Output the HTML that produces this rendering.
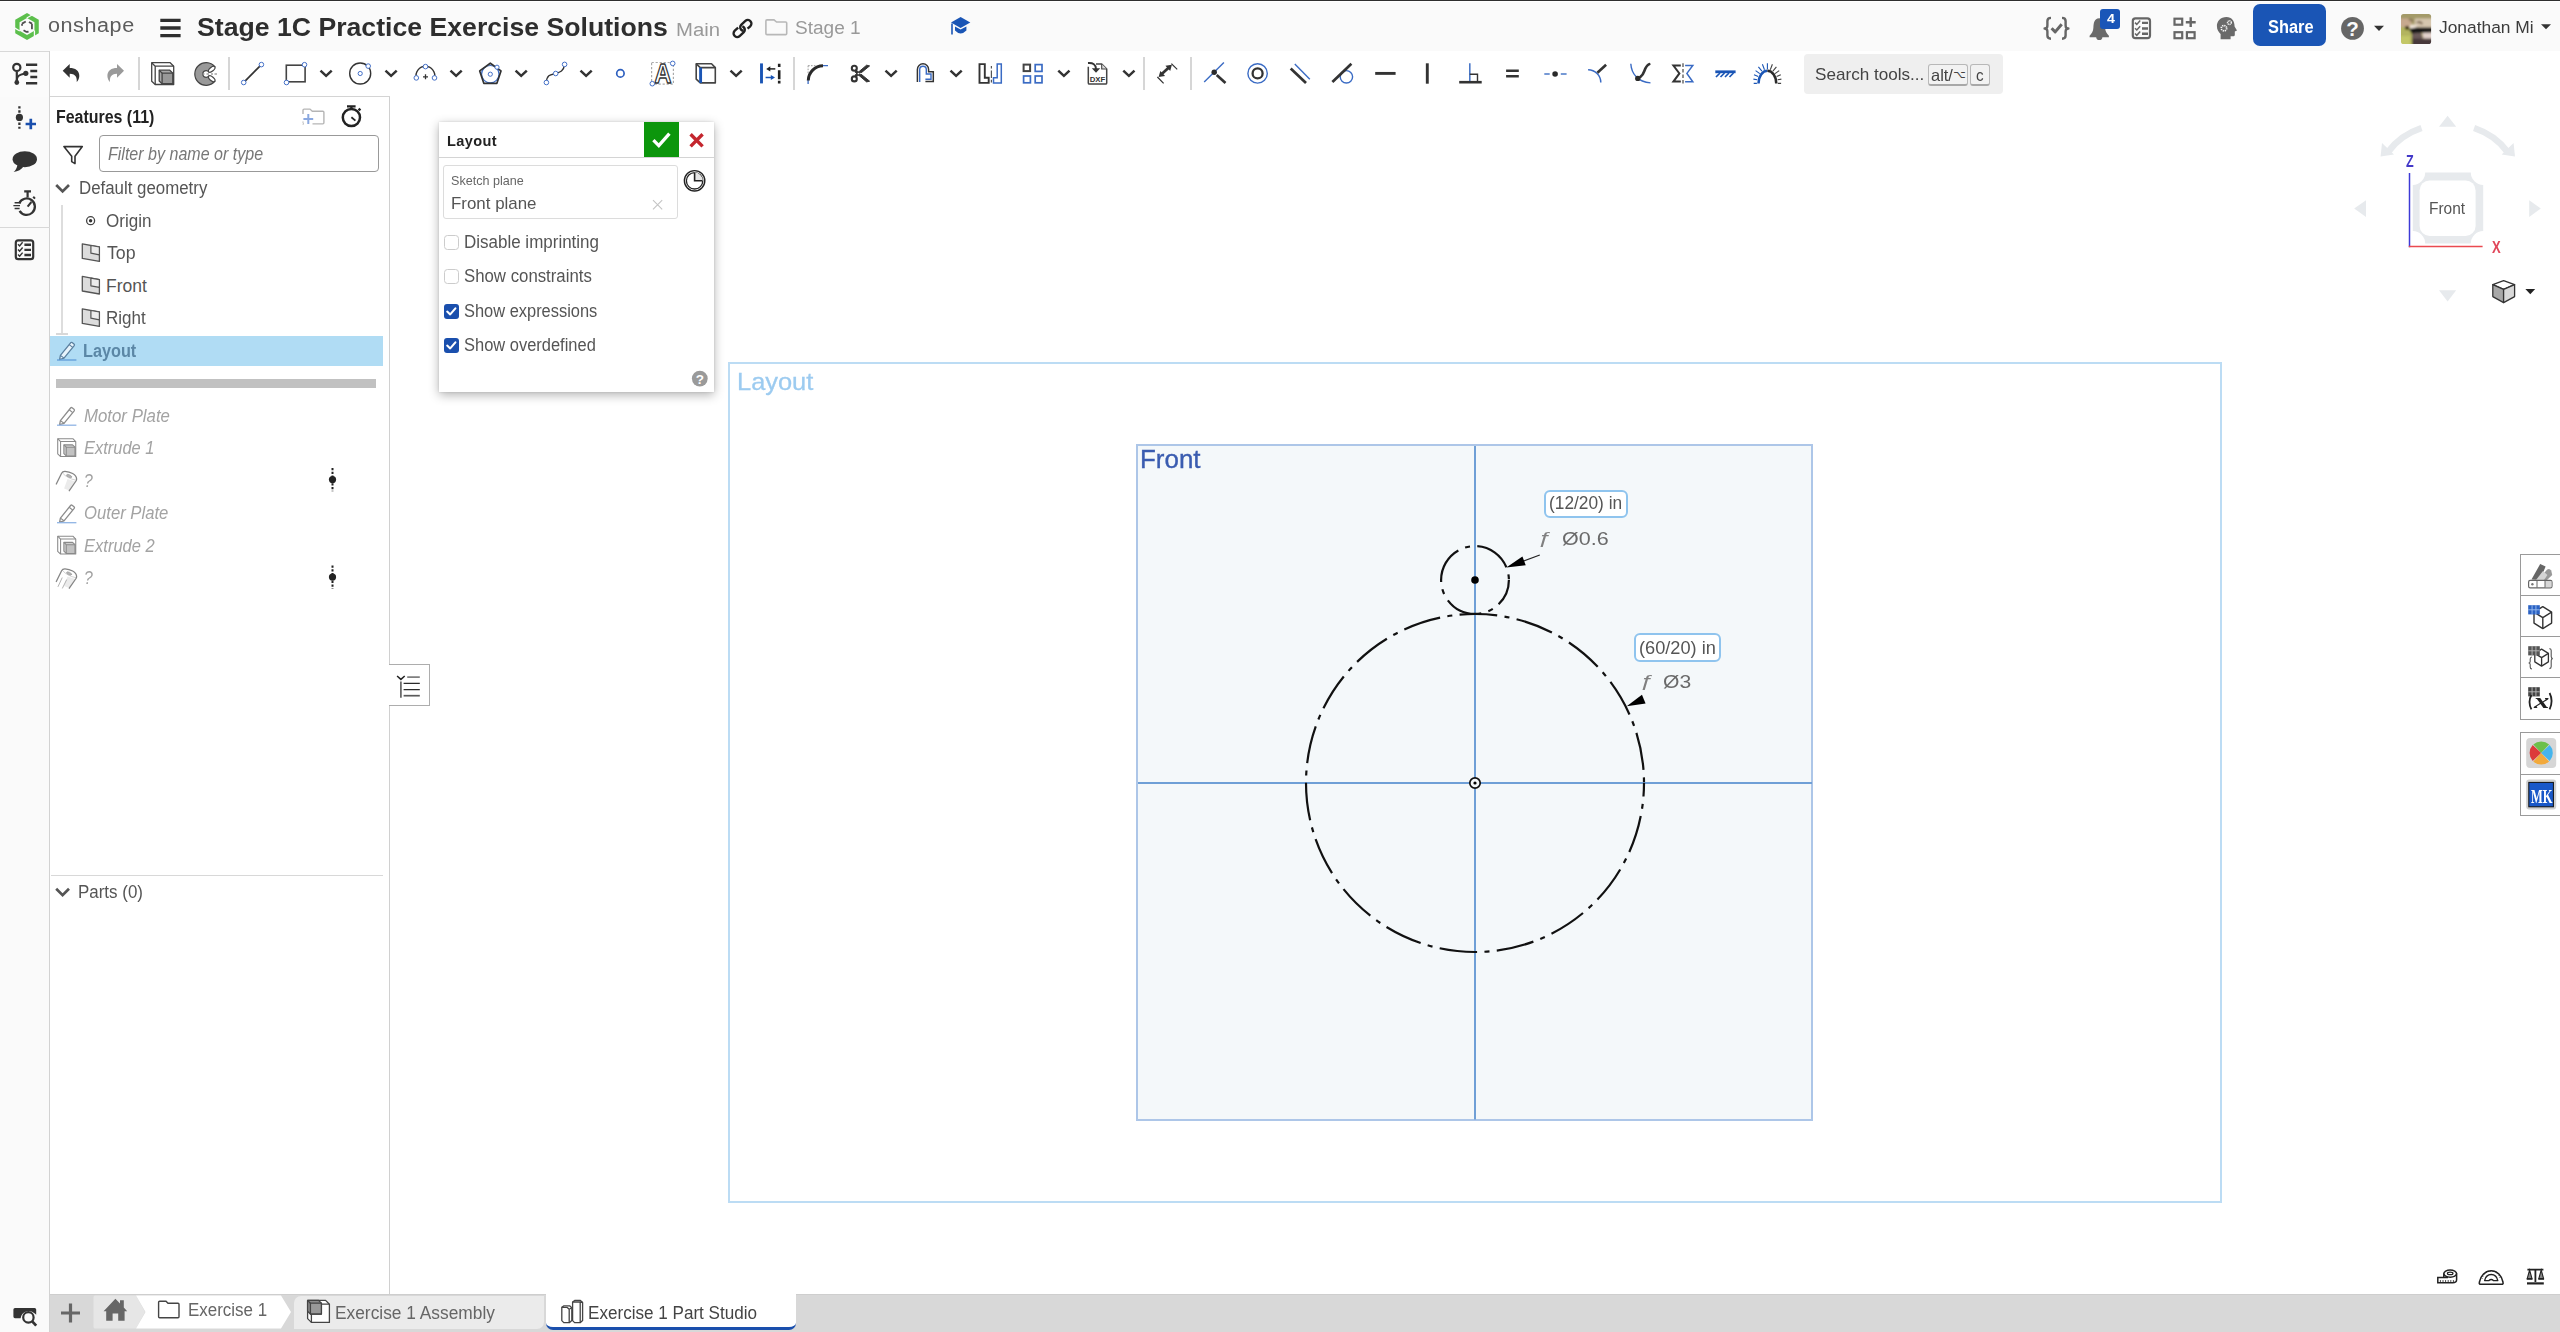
<!DOCTYPE html>
<html lang="en"><head><meta charset="utf-8"><title>Stage 1C Practice Exercise Solutions</title>
<style>
html,body{margin:0;padding:0;background:#fff;}
body{font-family:"Liberation Sans",sans-serif;}
#app{position:relative;width:2560px;height:1332px;overflow:hidden;background:#fff;}
.b{position:absolute;box-sizing:border-box;display:block;}
.t{position:absolute;white-space:nowrap;transform-origin:0 0;display:block;}
svg{overflow:visible;}
</style></head><body><div id="app">
<div class="b" style="left:0px;top:0px;width:2560px;height:51px;background:#fafafa;"></div>
<div class="b" style="left:0px;top:0px;width:2560px;height:2.1px;background:#fff;"></div>
<div class="b" style="left:0px;top:0px;width:2560px;height:1.15px;background:#2e2e2e;"></div>
<div class="b" style="left:0px;top:51px;width:2560px;height:46px;background:#fff;"></div>
<div class="b" style="left:50px;top:96px;width:340px;height:1px;background:#d4d4d4;"></div>
<div class="b" style="left:0px;top:51px;width:50px;height:1281px;background:#fafafa;"></div>
<div class="b" style="left:49px;top:51px;width:1.2px;height:1281px;background:#d2d2d2;"></div>
<div class="b" style="left:0px;top:51px;width:49px;height:46px;background:#fbfbfb;border-top:1px solid #d8d8d8;"></div>
<div class="b" style="left:0px;top:227px;width:50px;height:1px;background:#d8d8d8;"></div>
<div class="b" style="left:50px;top:97px;width:339px;height:1198px;background:#fff;"></div>
<div class="b" style="left:389px;top:97px;width:1px;height:1198px;background:#d0d0d0;"></div>
<span class="t" style="left:197.20px;top:14px;font-size:26.5px;line-height:26.5px;color:#2e2e2e;font-weight:700;transform:scaleX(1.0053);">Stage 1C Practice Exercise Solutions</span>
<span class="t" style="left:676.38px;top:21px;font-size:18px;line-height:18px;color:#999;transform:scaleX(1.1276);">Main</span>
<span class="t" style="left:794.74px;top:18px;font-size:19.2px;line-height:19.2px;color:#999;transform:scaleX(0.9935);">Stage 1</span>
<span class="t" style="left:48.14px;top:16px;font-size:19.6px;line-height:19.6px;color:#5c5c5c;letter-spacing:0.5px;transform:scaleX(1.1020);">onshape</span>
<div class="b" style="left:2253px;top:4px;width:73px;height:42px;background:#1a55b5;border-radius:7px;"></div>
<span class="t" style="left:2267.51px;top:18px;font-size:18px;line-height:18px;color:#fff;font-weight:700;transform:scaleX(0.9106);">Share</span>
<span class="t" style="left:2438.64px;top:20px;font-size:16.8px;line-height:16.8px;color:#3c3c3c;transform:scaleX(1.0351);">Jonathan Mi</span>
<div class="b" style="left:1803.6px;top:53.6px;width:199.2px;height:40.6px;background:#efefef;border-radius:4px;"></div>
<span class="t" style="left:1815.33px;top:66px;font-size:17px;line-height:17px;color:#444;transform:scaleX(1.0063);">Search tools...</span>
<div class="b" style="left:1928.3px;top:64px;width:40.2px;height:21.8px;background:#f2f2f2;border:1px solid #b8b8b8;border-bottom:2px solid #a8a8a8;border-radius:3px;"></div>
<div class="b" style="left:1969.6px;top:64px;width:20.4px;height:21.8px;background:#f2f2f2;border:1px solid #b8b8b8;border-bottom:2px solid #a8a8a8;border-radius:3px;"></div>
<span class="t" style="left:1931.44px;top:67px;font-size:16.5px;line-height:16.5px;color:#444;transform:scaleX(0.9968);">alt/</span>
<span class="t" style="left:1953.2px;top:67.6px;font-size:10.8px;line-height:14px;color:#444;font-family:'DejaVu Sans',sans-serif;">⌥</span>
<span class="t" style="left:1976.09px;top:67px;font-size:16.5px;line-height:16.5px;color:#444;transform:scaleX(0.9195);">c</span>
<div class="b" style="left:137.8px;top:57px;width:2px;height:33px;background:#d6d6d6;"></div>
<div class="b" style="left:228px;top:57px;width:2px;height:33px;background:#d6d6d6;"></div>
<div class="b" style="left:793px;top:57px;width:2px;height:33px;background:#d6d6d6;"></div>
<div class="b" style="left:1143px;top:57px;width:2px;height:33px;background:#d6d6d6;"></div>
<div class="b" style="left:1190.3px;top:57px;width:2px;height:33px;background:#d6d6d6;"></div>
<span class="t" style="left:55.76px;top:109px;font-size:17.5px;line-height:17.5px;color:#222;font-weight:700;transform:scaleX(0.9107);">Features (11)</span>
<div class="b" style="left:99px;top:135px;width:280px;height:37px;background:#fff;border:1px solid #999;border-radius:4px;"></div>
<span class="t" style="left:107.52px;top:146px;font-size:17.5px;line-height:17.5px;color:#777;font-style:italic;transform:scaleX(0.9162);">Filter by name or type</span>
<span class="t" style="left:78.95px;top:180px;font-size:17.5px;line-height:17.5px;color:#555;transform:scaleX(0.9631);">Default geometry</span>
<span class="t" style="left:106.23px;top:213px;font-size:17.5px;line-height:17.5px;color:#555;transform:scaleX(0.9729);">Origin</span>
<span class="t" style="left:106.65px;top:245px;font-size:17.5px;line-height:17.5px;color:#555;transform:scaleX(1.0138);">Top</span>
<span class="t" style="left:106.00px;top:278px;font-size:17.5px;line-height:17.5px;color:#555;">Front</span>
<span class="t" style="left:106.04px;top:310px;font-size:17.5px;line-height:17.5px;color:#555;transform:scaleX(0.9723);">Right</span>
<div class="b" style="left:61px;top:205px;width:2px;height:129px;background:#dddddd;"></div>
<div class="b" style="left:56px;top:333px;width:12px;height:1.6px;background:#d8d8d8;"></div>
<div class="b" style="left:50px;top:336px;width:333px;height:30px;background:#b0dcf4;"></div>
<span class="t" style="left:83.04px;top:343px;font-size:17.5px;line-height:17.5px;color:#5b87a6;font-weight:700;transform:scaleX(0.9286);">Layout</span>
<div class="b" style="left:56px;top:379px;width:320px;height:8.5px;background:#c1c1c1;"></div>
<span class="t" style="left:84.00px;top:408px;font-size:17.5px;line-height:17.5px;color:#a3a3a3;font-style:italic;transform:scaleX(0.9605);">Motor Plate</span>
<span class="t" style="left:84.01px;top:440px;font-size:17.5px;line-height:17.5px;color:#a3a3a3;font-style:italic;transform:scaleX(0.9398);">Extrude 1</span>
<span class="t" style="left:84.24px;top:473px;font-size:17.5px;line-height:17.5px;color:#a3a3a3;font-style:italic;transform:scaleX(0.9023);">?</span>
<span class="t" style="left:83.58px;top:505px;font-size:17.5px;line-height:17.5px;color:#a3a3a3;font-style:italic;transform:scaleX(0.9530);">Outer Plate</span>
<span class="t" style="left:84.00px;top:538px;font-size:17.5px;line-height:17.5px;color:#a3a3a3;font-style:italic;transform:scaleX(0.9445);">Extrude 2</span>
<span class="t" style="left:84.24px;top:570px;font-size:17.5px;line-height:17.5px;color:#a3a3a3;font-style:italic;transform:scaleX(0.9023);">?</span>
<div class="b" style="left:51px;top:875px;width:332px;height:1px;background:#d8d8d8;"></div>
<span class="t" style="left:78.14px;top:884px;font-size:17.5px;line-height:17.5px;color:#555;transform:scaleX(0.9679);">Parts (0)</span>
<div class="b" style="left:389px;top:664px;width:41px;height:42px;background:#fff;border:1px solid #adadad;border-left:none;"></div>
<div class="b" style="left:439px;top:122px;width:275px;height:270px;background:#fff;box-shadow:0 3px 10px rgba(0,0,0,0.30),0 0 2px rgba(0,0,0,0.12);"></div>
<div class="b" style="left:439px;top:157px;width:275px;height:1px;background:#d4d4d4;"></div>
<div class="b" style="left:644px;top:122px;width:35px;height:35px;background:#0c960c;"></div>
<span class="t" style="left:447.15px;top:133px;font-size:15.5px;line-height:15.5px;color:#222;font-weight:700;letter-spacing:0.4px;transform:scaleX(0.9380);">Layout</span>
<div class="b" style="left:443px;top:165px;width:235px;height:54px;background:#fff;border:1px solid #dcdcdc;border-radius:3px;"></div>
<span class="t" style="left:451.33px;top:174px;font-size:13.5px;line-height:13.5px;color:#666;transform:scaleX(0.9321);">Sketch plane</span>
<span class="t" style="left:450.75px;top:195px;font-size:17px;line-height:17px;color:#555;transform:scaleX(0.9941);">Front plane</span>
<div class="b" style="left:444.3px;top:235.4px;width:14.5px;height:14.5px;background:#fff;border:1px solid #ccc;border-radius:3.5px;"></div>
<span class="t" style="left:463.84px;top:234px;font-size:17.5px;line-height:17.5px;color:#555;transform:scaleX(0.9707);">Disable imprinting</span>
<div class="b" style="left:444.3px;top:269.4px;width:14.5px;height:14.5px;background:#fff;border:1px solid #ccc;border-radius:3.5px;"></div>
<span class="t" style="left:463.64px;top:268px;font-size:17.5px;line-height:17.5px;color:#555;transform:scaleX(0.9593);">Show constraints</span>
<div class="b" style="left:444.3px;top:304px;width:14.5px;height:14.5px;background:#1a4fad;border-radius:3px;"></div>
<svg class="b" style="left:444.3px;top:304px;" width="14.5" height="14.5" viewBox="0 0 14.5 14.5"><path d="M3.2 7.6 L6.2 10.4 L11.4 4.4" fill="none" stroke="#fff" stroke-width="2.1" stroke-linecap="round" stroke-linejoin="round"/></svg>
<span class="t" style="left:463.66px;top:303px;font-size:17.5px;line-height:17.5px;color:#555;transform:scaleX(0.9388);">Show expressions</span>
<div class="b" style="left:444.3px;top:338px;width:14.5px;height:14.5px;background:#1a4fad;border-radius:3px;"></div>
<svg class="b" style="left:444.3px;top:338px;" width="14.5" height="14.5" viewBox="0 0 14.5 14.5"><path d="M3.2 7.6 L6.2 10.4 L11.4 4.4" fill="none" stroke="#fff" stroke-width="2.1" stroke-linecap="round" stroke-linejoin="round"/></svg>
<span class="t" style="left:463.66px;top:337px;font-size:17.5px;line-height:17.5px;color:#555;transform:scaleX(0.9409);">Show overdefined</span>
<div class="b" style="left:50.2px;top:1294.2px;width:2510px;height:38px;background:#d8d8d8;border-top:1px solid #cecece;"></div>
<svg class="b" style="left:93px;top:1295px;" width="60" height="34" viewBox="0 0 60 34"><path d="M2 0.5 H43 L52 17 L43 33.5 H2 Q0.5 33.5 0.5 32 V2 Q0.5 0.5 2 0.5Z" fill="#e6e6e6"/></svg>
<svg class="b" style="left:136px;top:1295px;" width="160" height="34" viewBox="0 0 160 34"><path d="M0 0.5 H145 L155 17 L145 33.5 H0 L9.5 17Z" fill="#fff"/></svg>
<span class="t" style="left:187.74px;top:1302px;font-size:17.5px;line-height:17.5px;color:#666;transform:scaleX(0.9692);">Exercise 1</span>
<div class="b" style="left:293.5px;top:1295.5px;width:250.5px;height:33px;background:#ebebeb;border-radius:7px 0 7px 0;"></div>
<span class="t" style="left:334.61px;top:1305px;font-size:17.5px;line-height:17.5px;color:#666;transform:scaleX(0.9904);">Exercise 1 Assembly</span>
<div class="b" style="left:546px;top:1293px;width:250px;height:37px;background:#fff;border-radius:0 0 7px 7px;border-bottom:3px solid #1a4fad;"></div>
<span class="t" style="left:587.73px;top:1305px;font-size:17.5px;line-height:17.5px;color:#444;transform:scaleX(0.9763);">Exercise 1 Part Studio</span>
<div class="b" style="left:728px;top:362px;width:1493.5px;height:841.3px;border:2px solid #bcdcf4;"></div>
<span class="t" style="left:737.47px;top:370px;font-size:24px;line-height:24px;color:#9ccbf0;transform:scaleX(1.0592);-webkit-text-stroke:0.3px #9ccbf0;">Layout</span>
<div class="b" style="left:1136px;top:443.7px;width:677.3px;height:677px;background:#f4f8fa;border:2.5px solid #adc6e8;"></div>
<span class="t" style="left:1139.63px;top:447px;font-size:25px;line-height:25px;color:#3a5cb0;transform:scaleX(1.0370);-webkit-text-stroke:0.35px #3a5cb0;">Front</span>
<svg class="b" style="left:1130px;top:440px;" width="690" height="690" viewBox="0 0 690 690"><path d="M345.00 6.00 V679.5" stroke="#6f9fd6" stroke-width="2" fill="none"/><path d="M8.00 343.00 H682" stroke="#6f9fd6" stroke-width="2" fill="none"/><path d="M514.00 343.00 A169 169 0 0 0 176.00 343.00 A169 169 0 0 0 514.00 343.00" fill="none" stroke="#111" stroke-width="2.2" stroke-dasharray="37.75 7.37 5 7.37" stroke-dashoffset="44.4"/><path d="M378.90 140.00 A33.9 33.9 0 0 0 311.10 140.00 A33.9 33.9 0 0 0 378.90 140.00" fill="none" stroke="#111" stroke-width="2.2" stroke-dasharray="37.75 7.37 5 7.37" stroke-dashoffset="44.4"/><circle cx="345" cy="140" r="3.8" fill="#000"/><circle cx="345" cy="343" r="5.2" fill="#f4f8fa" stroke="#111" stroke-width="1.7"/><circle cx="345" cy="343" r="1.6" fill="#000"/><path d="M409.80 115.00 L382.00 125.40" stroke="#222" stroke-width="1.3" fill="none"/><path d="M376.30 127.60 L395.76 125.36 L392.41 116.47Z" fill="#000"/><path d="M496.70 266.20 L515.60 263.48 L511.95 254.71Z" fill="#000"/></svg>
<div class="b" style="left:1543.8px;top:490px;width:84.5px;height:27.5px;background:#fff;border:2px solid #8fc4ee;border-radius:6px;"></div>
<span class="t" style="left:1549.46px;top:495px;font-size:17.5px;line-height:17.5px;color:#555;transform:scaleX(0.9895);">(12/20) in</span>
<div class="b" style="left:1634px;top:633px;width:86.5px;height:29px;background:#fff;border:2px solid #8fc4ee;border-radius:6px;"></div>
<span class="t" style="left:1639.41px;top:640px;font-size:17.5px;line-height:17.5px;color:#555;transform:scaleX(1.0397);">(60/20) in</span>
<span class="t" style="left:1537.45px;top:530px;font-size:16.5px;line-height:16.5px;color:#808080;font-style:italic;transform:scaleX(1.5354);">ƒ</span>
<span class="t" style="left:1562.25px;top:529px;font-size:19px;line-height:19px;color:#6a6a6a;transform:scaleX(1.1332);">Ø0.6</span>
<span class="t" style="left:1639.45px;top:673px;font-size:16.5px;line-height:16.5px;color:#808080;font-style:italic;transform:scaleX(1.5354);">ƒ</span>
<span class="t" style="left:1663.16px;top:672px;font-size:19px;line-height:19px;color:#6a6a6a;transform:scaleX(1.1111);">Ø3</span>
<svg class="b" style="left:0px;top:0px;" width="2560" height="100" viewBox="0 0 2560 100"><path d="M62.7 70.8 L69.7 64 V68 C75.2 68 79.3 70.6 79.3 76 C79.3 78.6 78 80.8 76.7 82 C77.1 78.6 76.3 73.8 69.7 73.8 V77.8 Z" fill="#333"/><g transform="translate(186.7 0) scale(-1 1)"><path d="M62.7 70.8 L69.7 64 V68 C75.2 68 79.3 70.6 79.3 76 C79.3 78.6 78 80.8 76.7 82 C77.1 78.6 76.3 73.8 69.7 73.8 V77.8 Z" fill="#9a9a9a"/></g><g transform="translate(151.2 62.2) scale(1.0)" stroke="#444" stroke-width="1.3" stroke-linejoin="round" fill="none"><path d="M0.5 0.5 H19 L22.5 4 V22.3 H4 L0.5 19 Z" fill="#fff"/><path d="M0.5 0.5 L4 4 H22.5 M4 4 V22.3"/><path d="M8 8 H18.6 L21.6 10.9 V21.5 H10.9 L8 18.8 Z" fill="#aaa"/><path d="M10.9 10.9 H21.6 V21.5 H10.9 Z" fill="#999"/><path d="M8 8 L10.9 10.9"/></g><g stroke="#444" stroke-width="1.2"><path d="M214.76 66.74 A11.3 11.3 0 1 0 214.76 81.26 L208.7 76.2 A3.4 3.4 0 1 1 208.7 71.8 Z" fill="#999"/><ellipse cx="211.73" cy="69.28" rx="3.95" ry="1.9" transform="rotate(-40 211.73 69.28)" fill="#fff"/><ellipse cx="211.73" cy="78.72" rx="3.95" ry="1.9" transform="rotate(40 211.73 78.72)" fill="#fff"/><path d="M202 74 H204.5 M206.5 74 H209 M211 74 H213 M214.5 74 H217" stroke="#777" stroke-width="1.1" fill="none"/></g><path d="M243.8 82.4 L261.2 64.8" stroke="#333" stroke-width="1.7"/><circle cx="243.7" cy="82.5" r="2.3" fill="#fff" stroke="#4470c8" stroke-width="1"/><circle cx="261.4" cy="64.6" r="2.3" fill="#fff" stroke="#4470c8" stroke-width="1"/><rect x="286.3" y="65.2" width="18.8" height="16.6" fill="none" stroke="#444" stroke-width="1.6"/><circle cx="304.5" cy="64.7" r="2.3" fill="#fff" stroke="#4470c8" stroke-width="1"/><circle cx="286.5" cy="82.5" r="2.3" fill="#fff" stroke="#4470c8" stroke-width="1"/><path d="M320.5 70.6 L326.1 75.9 L331.70000000000005 70.6" fill="none" stroke="#333" stroke-width="2.5" stroke-linejoin="miter"/><circle cx="360.2" cy="73.5" r="10.5" fill="none" stroke="#333" stroke-width="1.4"/><circle cx="360.2" cy="73.5" r="2.1" fill="#fff" stroke="#4470c8" stroke-width="1"/><circle cx="368.2" cy="66.1" r="2.3" fill="#fff" stroke="#4470c8" stroke-width="1"/><path d="M385.5 70.6 L391.1 75.9 L396.70000000000005 70.6" fill="none" stroke="#333" stroke-width="2.5" stroke-linejoin="miter"/><path d="M416.3 77.8 A9.35 9.35 0 1 1 434.5 77.8" fill="none" stroke="#333" stroke-width="1.4"/><circle cx="416.3" cy="77.9" r="2.3" fill="#fff" stroke="#4470c8" stroke-width="1"/><circle cx="434.5" cy="77.9" r="2.3" fill="#fff" stroke="#4470c8" stroke-width="1"/><circle cx="425.5" cy="66.6" r="2.3" fill="#fff" stroke="#4470c8" stroke-width="1"/><path d="M423 76.8 H428 M425.5 74.3 V79.3" stroke="#333" stroke-width="1.3"/><path d="M450.5 70.6 L456.1 75.9 L461.70000000000005 70.6" fill="none" stroke="#333" stroke-width="2.5" stroke-linejoin="miter"/><circle cx="490.3" cy="74.2" r="8.7" fill="none" stroke="#3a6bc4" stroke-width="1.2"/><path d="M490.3 63.2 L501 70.9 L496.9 83.3 H483.8 L479.7 70.9 Z" fill="none" stroke="#333" stroke-width="1.7" stroke-linejoin="round"/><circle cx="490.3" cy="74.2" r="2.1" fill="#fff" stroke="#4470c8" stroke-width="1"/><circle cx="497" cy="67.2" r="2.1" fill="#fff" stroke="#4470c8" stroke-width="1"/><path d="M515.6 70.6 L521.2 75.9 L526.8000000000001 70.6" fill="none" stroke="#333" stroke-width="2.5" stroke-linejoin="miter"/><path d="M546.4 82.5 C546.6 74 552 74.6 555.7 73.5 C560 72.2 563.8 71 564.6 64.4" fill="none" stroke="#333" stroke-width="1.4"/><circle cx="546.4" cy="82.5" r="2.3" fill="#fff" stroke="#4470c8" stroke-width="1"/><circle cx="555.7" cy="73.5" r="2.3" fill="#fff" stroke="#4470c8" stroke-width="1"/><circle cx="564.6" cy="64.4" r="2.3" fill="#fff" stroke="#4470c8" stroke-width="1"/><path d="M580.5 70.6 L586.1 75.9 L591.7 70.6" fill="none" stroke="#333" stroke-width="2.5" stroke-linejoin="miter"/><circle cx="620.4" cy="73.4" r="3.7" fill="#fff" stroke="#2d5fbf" stroke-width="1.7"/><rect x="651.6" y="62.5" width="21.8" height="21.6" fill="none" stroke="#aaa" stroke-width="1.2" stroke-dasharray="2.2 1.8"/><text transform="translate(663 83.2) scale(0.84 1)" font-family="Liberation Sans, sans-serif" font-weight="700" font-size="28.5" text-anchor="middle" fill="#fff" stroke="#333" stroke-width="1.4" stroke-linejoin="round">A</text><circle cx="672.7" cy="63.4" r="2.3" fill="#fff" stroke="#4470c8" stroke-width="1"/><circle cx="652.3" cy="83.7" r="2.3" fill="#fff" stroke="#4470c8" stroke-width="1"/><g fill="none" stroke="#444" stroke-width="1.6" stroke-linejoin="round"><path d="M696.2 63.8 H711.5 L715.3 67.6 V82.9 H700.3 L696.2 79.2 Z" fill="#fff"/><path d="M696.2 63.8 L700.3 67.6 H715.3"/></g><path d="M700.6 67.6 V82.9" stroke="#1a55b5" stroke-width="2.9"/><path d="M730.5 70.6 L736.1 75.9 L741.7 70.6" fill="none" stroke="#333" stroke-width="2.5" stroke-linejoin="miter"/><path d="M761.5 63.4 V83.4" stroke="#1a55b5" stroke-width="2.9"/><path d="M779.2 63.7 V67 M779.2 70.2 V79.2 M779.2 80.8 V83.4" stroke="#222" stroke-width="2.6"/><path d="M775.3 68.9 H768" stroke="#222" stroke-width="1.5"/><path d="M766.2 68.9 L770.3 66.3 V71.5Z" fill="#222"/><path d="M765.6 77.5 H773" stroke="#1a55b5" stroke-width="1.5"/><path d="M775 77.5 L770.8 74.9 V80.1Z" fill="#1a55b5"/><path d="M808.1 65.7 H815.5 M808.1 65.7 V74" stroke="#999" stroke-width="1" stroke-dasharray="1.6 1.3" fill="none"/><path d="M808.1 84 V79 M822 65.6 H828" stroke="#3a6bc4" stroke-width="1.3" fill="none"/><path d="M808.3 80.5 A14.9 14.9 0 0 1 823 65.8" stroke="#2a2a2a" stroke-width="3" fill="none"/><g fill="none" stroke="#333" stroke-width="2.1"><circle cx="854.3" cy="68.2" r="2.5"/><circle cx="854.3" cy="78.9" r="2.5"/></g><path d="M856 70 L869.6 81.2 L866.6 81.9 L855.2 72.2 Z M856 77.1 L869.6 65.9 L866.6 65.2 L855.2 74.9 Z" fill="#333" stroke="#333" stroke-width="1" stroke-linejoin="round"/><circle cx="860.9" cy="73.55" r="0.8" fill="#fff"/><path d="M885.5 70.6 L891.1 75.9 L896.7 70.6" fill="none" stroke="#333" stroke-width="2.5" stroke-linejoin="miter"/><path d="M917.4 82 V69.4 A5.6 5.6 0 0 1 928.6 69.4 V71.8 H933.3 V81.6 H925.4" fill="none" stroke="#333" stroke-width="1.5"/><path d="M919.7 82 V69.6 A3.3 3.3 0 0 1 926.3 69.6 V74 H931 V79.3 H925.4" fill="none" stroke="#3a6bc4" stroke-width="1.4"/><path d="M950.5 70.6 L956.1 75.9 L961.7 70.6" fill="none" stroke="#333" stroke-width="2.5" stroke-linejoin="miter"/><path d="M979.5 64.1 H984.8 V77.8 H988.7 V82.9 H979.5 Z" fill="#fff" stroke="#333" stroke-width="1.9"/><path d="M991.4 66 V68.5 M991.4 70.5 V78 M991.4 79.8 V82.6" stroke="#555" stroke-width="1.2"/><path d="M1001.3 64.1 H997.2 V77.8 H993.5 V82.9 H1001.3 Z" fill="#fff" stroke="#3a6bc4" stroke-width="1.5"/><rect x="1023.6" y="64.6" width="6.5" height="6.5" fill="none" stroke="#444" stroke-width="2"/><rect x="1035.2" y="64.6" width="6.8" height="6.8" fill="none" stroke="#3a6bc4" stroke-width="1.7"/><rect x="1023.6" y="76" width="6.8" height="6.8" fill="none" stroke="#3a6bc4" stroke-width="1.7"/><rect x="1035.2" y="76" width="6.8" height="6.8" fill="none" stroke="#3a6bc4" stroke-width="1.7"/><path d="M1058.3000000000002 70.6 L1063.9 75.9 L1069.5 70.6" fill="none" stroke="#333" stroke-width="2.5" stroke-linejoin="miter"/><path d="M1088.3 66.8 V83 Q1088.3 84.1 1089.4 84.1 H1105.6 Q1106.7 84.1 1106.7 83 V69 L1101.7 64 H1096" fill="#fff" stroke="#444" stroke-width="1.5" stroke-linejoin="round"/><path d="M1101.7 64 V69 H1106.7" fill="#ddd" stroke="#444" stroke-width="1.1"/><path d="M1088 63 C1093 62.6 1096 64.5 1096 69" fill="none" stroke="#333" stroke-width="1.9"/><path d="M1091.8 68.3 H1100.2 L1096 72.8 Z" fill="#333"/><text x="1097.5" y="81.9" font-family="Liberation Sans, sans-serif" font-weight="700" font-size="7.6" text-anchor="middle" fill="#333" textLength="15.6" lengthAdjust="spacingAndGlyphs">DXF</text><path d="M1123.3000000000002 70.6 L1128.9 75.9 L1134.5 70.6" fill="none" stroke="#333" stroke-width="2.5" stroke-linejoin="miter"/><path d="M1162 73.8 L1168.6 67.8" stroke="#333" stroke-width="2.8"/><path d="M1158.6 77 L1160.3 70.9 L1165.1 76.1 Z M1171.9 64.8 L1170.2 70.9 L1165.4 65.7 Z" fill="#333"/><path d="M1171.4 63.6 L1177.2 69.4 M1157.4 77 L1163.6 83.4" stroke="#333" stroke-width="1.2"/><path d="M1204.2 82 L1223.9 62.5" stroke="#3a6bc4" stroke-width="1.4"/><circle cx="1214.2" cy="72.2" r="2.7" fill="#2a2a2a"/><path d="M1216.7 75 L1225.5 82.9" stroke="#333" stroke-width="2.7"/><circle cx="1257.6" cy="73.4" r="9.7" fill="none" stroke="#3a6bc4" stroke-width="1.4"/><circle cx="1257.6" cy="73.4" r="5.0" fill="none" stroke="#333" stroke-width="2.3"/><path d="M1290.7 68.5 L1306 82.9" stroke="#333" stroke-width="2.7"/><path d="M1294.8 64 L1309.8 79.2" stroke="#3a6bc4" stroke-width="1.4"/><circle cx="1346.4" cy="76.8" r="6.2" fill="none" stroke="#3a6bc4" stroke-width="1.4"/><path d="M1332.4 82 L1351.4 63.8" stroke="#333" stroke-width="2.7"/><path d="M1375.2 73.4 H1395.6" stroke="#333" stroke-width="2.9"/><path d="M1427.3 63.3 V83.7" stroke="#333" stroke-width="2.9"/><path d="M1469.8 63.3 V81" stroke="#4a78c8" stroke-width="1.6"/><path d="M1469.8 74.3 H1477.5 V81" fill="none" stroke="#333" stroke-width="1.4"/><path d="M1459.2 82.2 H1481.7" stroke="#333" stroke-width="2.6"/><path d="M1506.1 70.7 H1518.8 M1506.1 76.3 H1518.8" stroke="#333" stroke-width="2.6"/><path d="M1544.3 74 H1549.7 M1560.8 74 H1566.6" stroke="#4a78c8" stroke-width="1.6"/><circle cx="1555.1" cy="74" r="2.8" fill="#2a2a2a"/><path d="M1588.1 69.8 A12.7 12.7 0 0 1 1600.8 82.5" fill="none" stroke="#3a6bc4" stroke-width="1.5"/><path d="M1597.4 72.8 L1606.1 64.7" stroke="#333" stroke-width="2.6"/><path d="M1630.8 63.7 C1631.5 74 1638 82 1650.5 82.9" fill="none" stroke="#3a6bc4" stroke-width="1.4"/><path d="M1640.4 76.9 C1645.5 73.5 1643.5 67 1649.3 64.2" fill="none" stroke="#333" stroke-width="2.6" stroke-linecap="round"/><circle cx="1637.8" cy="78.4" r="2.7" fill="#2a2a2a"/><path d="M1680.8 65.5 H1673.4 L1679.4 73.4 L1673.4 81.6 H1680.8" fill="none" stroke="#333" stroke-width="2"/><path d="M1683 63.3 V67 M1683 69 V72.5 M1683 74.5 V78 M1683 80 V83.4" stroke="#555" stroke-width="1.3"/><path d="M1685.1 65.4 H1692.8 L1686.9 73.4 L1692.8 81.7 H1685.1" fill="none" stroke="#3a6bc4" stroke-width="1.5"/><path d="M1715.3 71.8 H1735.6" stroke="#1a55b5" stroke-width="2.8"/><path d="M1720 73 L1716 77 M1724.5 73 L1720.5 77 M1729 73 L1725 77 M1733.5 73 L1729.5 77" stroke="#1a55b5" stroke-width="1.7"/><path d="M1756.9 83.4 L1753.7 83.4 M1757.2 79.8 L1753.4 79.1 M1758.2 76.5 L1754.0 74.8 M1759.8 73.6 L1755.6 70.6 M1761.9 71.2 L1758.4 66.9 M1764.5 69.7 L1762.4 64.2 M1767.4 69.2 L1767.4 63.2 " stroke="#1a55b5" stroke-width="1.1"/><path d="M1770.3 69.7 L1772.4 64.2 M1772.9 71.2 L1776.4 66.9 M1775.0 73.6 L1779.2 70.6 M1776.6 76.5 L1780.8 74.8 M1777.6 79.8 L1781.4 79.1 M1777.9 83.4 L1781.1 83.4 " stroke="#444" stroke-width="1.1"/><path d="M1758.5 83.6 A8.9 12.6 0 0 1 1767.4 70.8" fill="none" stroke="#1a55b5" stroke-width="2.6"/><path d="M1767.4 70.8 A8.9 12.6 0 0 1 1776.3 83.6" fill="none" stroke="#2a2a2a" stroke-width="2.6"/></svg>
<svg class="b" style="left:0px;top:0px;" width="2560" height="52" viewBox="0 0 2560 52"><polygon points="27.00,12.90 15.22,19.70 15.22,33.30 27.00,40.10 38.78,33.30 38.78,19.70" fill="#5cbf4c"/><polygon points="27.00,17.90 19.55,22.20 19.55,30.80 27.00,35.10 34.45,30.80 34.45,22.20" fill="#fafafa"/><path d="M26.74 18.05 L33.81 13.97" stroke="#fafafa" stroke-width="1.3"/><path d="M19.81 30.95 L12.74 26.87" stroke="#fafafa" stroke-width="1.3"/><path d="M34.45 30.50 L34.45 38.67" stroke="#fafafa" stroke-width="1.3"/><path d="M25.77 21.51 L22.06 23.65 M22.06 23.65 L22.06 25.64 M28.97 21.94 L31.94 23.65 M31.94 23.65 L31.94 29.35 M23.54 30.21 L27.00 32.20 M27.00 32.20 L28.48 31.35 " stroke="#505050" stroke-width="1.8" fill="none" stroke-linejoin="round"/><path d="M160.3 20.4 H180.6 M160.3 28 H180.6 M160.3 35.6 H180.6" stroke="#2e2e2e" stroke-width="3.3"/><g fill="none" stroke="#222" stroke-width="2.4"><rect x="-6.3" y="-3.6" width="12.6" height="7.2" rx="3.6" transform="translate(739.2 31.6) rotate(-42)" stroke-dasharray="27 4.5" stroke-dashoffset="-9"/><rect x="-6.3" y="-3.6" width="12.6" height="7.2" rx="3.6" transform="translate(745.8 25.4) rotate(-42)" stroke-dasharray="27 4.5" stroke-dashoffset="7"/></g><path d="M765.9 21 Q765.9 19.9 767 19.9 H774 L776.6 22 H785.6 Q786.7 22 786.7 23.1 V33.5 Q786.7 34.6 785.6 34.6 H767 Q765.9 34.6 765.9 33.5 Z" fill="none" stroke="#b8b8b8" stroke-width="1.6"/><path d="M960.6 17.1 L970.3 22.6 L960.6 27.9 L951 22.6 Z" fill="#1a55b5"/><path d="M955 26.4 V30.6 Q960.6 36.5 966.4 30.6 V26.4 L960.6 29.6 Z" fill="#1a55b5"/><path d="M952 23.4 V34.4" stroke="#1a55b5" stroke-width="1.6"/><g fill="none" stroke="#666" stroke-width="2.4" stroke-linejoin="round"><path d="M2051 17.9 Q2047.4 17.9 2047.4 21 V25.4 Q2047.4 28.5 2044.6 28.5 Q2047.4 28.5 2047.4 31.6 V35.6 Q2047.4 38.7 2051 38.7"/><path d="M2062 17.9 Q2065.6 17.9 2065.6 21 V25.4 Q2065.6 28.5 2068.4 28.5 Q2065.6 28.5 2065.6 31.6 V35.6 Q2065.6 38.7 2062 38.7"/><path d="M2051.6 28.3 L2055.2 31.9 L2061.7 24.2" stroke-width="3"/></g><path d="M2099.2 18.2 C2094 18.2 2093.6 23.5 2093.4 27.5 C2093.2 31.5 2091.8 33.5 2089.6 35.8 V37.2 H2108.9 V35.8 C2106.7 33.5 2105.3 31.5 2105.1 27.5 C2104.9 23.5 2104.5 18.2 2099.2 18.2 Z" fill="#6a6a6a"/><path d="M2096.2 37 A3.1 3.1 0 0 0 2102.4 37 Z" fill="#6a6a6a"/><rect x="2132.8" y="18.4" width="17.2" height="19.8" rx="2.6" fill="none" stroke="#666" stroke-width="2.2"/><path d="M2142 22.9 H2148 M2142 28.5 H2148 M2142 33.8 H2148" stroke="#666" stroke-width="2.4"/><path d="M2135 22.6 L2136.8 24.4 L2140.2 20.6 M2135 28.2 L2136.8 30 L2140.2 26.2 M2135 33.5 L2136.8 35.3 L2140.2 31.5" fill="none" stroke="#666" stroke-width="1.5"/><rect x="2174.5" y="18.7" width="7.7" height="6" fill="none" stroke="#666" stroke-width="2.2"/><rect x="2174.5" y="32.2" width="7.7" height="6" fill="none" stroke="#666" stroke-width="2.2"/><rect x="2186.9" y="32.2" width="7.7" height="6" fill="none" stroke="#666" stroke-width="2.2"/><path d="M2185.8 22.2 H2195.7 M2190.7 17.3 V27.1" stroke="#666" stroke-width="2.4"/><path d="M2226.5 16.9 C2220.5 16.9 2216.9 21.2 2216.9 26 C2216.9 30 2218.8 32.2 2220.6 34 V39.2 H2230.6 V36.3 H2233.4 Q2234.8 36.3 2234.8 34.8 V31.6 L2237 30.6 L2234.6 26.4 C2234.6 21 2231.8 16.9 2226.5 16.9 Z" fill="#6a6a6a"/><circle cx="2224" cy="28.2" r="2.7" fill="none" stroke="#fafafa" stroke-width="1.7" stroke-dasharray="1.3 0.8"/><circle cx="2229.4" cy="22.6" r="1.9" fill="none" stroke="#fafafa" stroke-width="1.4" stroke-dasharray="1 0.6"/><circle cx="2352.5" cy="28.4" r="11.4" fill="#666"/><text x="2352.5" y="35.6" font-family="Liberation Sans, sans-serif" font-weight="700" font-size="20.5" text-anchor="middle" fill="#fafafa">?</text><path d="M2374 25.8 H2384 L2379 31 Z" fill="#333"/><path d="M2541 24.2 H2551 L2546 29.3 Z" fill="#333"/><defs><clipPath id="avc"><rect x="2401" y="14" width="30.1" height="30.1" rx="2.6"/></clipPath><filter id="avb" x="-10%" y="-10%" width="120%" height="120%"><feGaussianBlur stdDeviation="0.9"/></filter></defs><g clip-path="url(#avc)"><g filter="url(#avb)"><rect x="2398" y="11" width="36" height="36" fill="#b3a878"/><rect x="2398" y="11" width="36" height="8.5" fill="#a39a68"/><path d="M2398 18.5 H2411 V27 H2398 Z" fill="#c7a98e"/><path d="M2398 27 H2412 L2413 47 H2398 Z" fill="#b3b45e"/><path d="M2400 36 H2410 V47 H2400 Z" fill="#c3c766"/><path d="M2415 18.5 H2434 V28 H2415 Z" fill="#d6c6ae"/><path d="M2416.5 22 C2419 20 2422 21 2423 24 L2421 24.6 C2420 23 2418.5 22.6 2417 23.6 Z" fill="#7a6450"/><path d="M2409 18 C2411 18.4 2413 19.4 2414.5 21.4 L2412 22.4 C2411 21 2410 20.4 2408.6 20.4 Z" fill="#8a7858"/><path d="M2410 25 H2416.5 V32 H2410 Z" fill="#f2e6da"/><path d="M2405.2 26 H2408.8 V29.6 H2405.2 Z" fill="#33240e"/><path d="M2408.8 29 L2416 27.4 L2434 27.6 V32.4 L2420 33 L2412 34 Z" fill="#141414"/><path d="M2412 33.5 L2421 33 L2423 38.6 L2412 40 Z" fill="#6a5a5a"/><path d="M2422.6 32.8 H2434 V38.8 H2423.6 Z" fill="#e2d2cc"/><path d="M2412 38.6 H2434 V47 H2412 Z" fill="#46373a"/></g></g></svg>
<div class="b" style="left:2100px;top:9.2px;width:20.1px;height:19.7px;background:#1a56b8;border-radius:3px;"></div>
<span class="t" style="left:2106.89px;top:13px;font-size:12.6px;line-height:12.6px;color:#fff;font-weight:700;transform:scaleX(1.1274);">4</span>
<svg class="b" style="left:0px;top:0px;" width="440" height="1000" viewBox="0 0 440 1000"><g fill="none" stroke="#333" stroke-width="2.5"><path d="M26 64.8 H37.2 M30.3 71 H37.2 M30.3 77.1 H37.2 M26 83.2 H37.2"/><path d="M16.8 71.6 V81.5" stroke-width="2.2"/><path d="M16.8 80 C17 75 21 74.5 25 73.5" stroke-width="2"/><circle cx="16.8" cy="67.4" r="3.6" fill="#fdfdfd" stroke-width="2.2"/></g><circle cx="16.8" cy="82.5" r="2.4" fill="#333"/><circle cx="25.8" cy="73.3" r="2.6" fill="#333"/><path d="M19.4 106.2 V128.8" stroke="#333" stroke-width="2.3" stroke-dasharray="2.4 1.7"/><circle cx="19.4" cy="117.4" r="3.6" fill="#333"/><path d="M25.6 124 H36 M30.8 118.8 V129.2" stroke="#1a4fad" stroke-width="2.7"/><ellipse cx="24.8" cy="159.2" rx="12.2" ry="8" fill="#333"/><path d="M17.5 164.5 C17 168 15.5 170.5 13.6 172 C18 171.5 21.5 169.5 23.5 166.5 Z" fill="#333"/><g fill="none" stroke="#333"><path d="M19.2 203.3 A8.2 8.2 0 1 1 19.6 210.8" stroke-width="2.3"/><path d="M24.2 191.3 H31 M27.6 191.3 V197.4" stroke-width="2.2"/><path d="M33.2 196.8 L35 198.6" stroke-width="2"/><path d="M27.6 206.6 L31.4 202" stroke-width="2"/><path d="M14.6 202.7 H21 M13.4 205.6 H20 M14.6 208.5 H19.6" stroke-width="1.4"/></g><rect x="15.8" y="240.4" width="17.4" height="18.8" rx="2.4" fill="none" stroke="#333" stroke-width="2.2"/><path d="M24.4 244.7 H31 M24.4 249.9 H31 M24.4 255 H31" stroke="#333" stroke-width="2.4"/><path d="M18 244.3 L19.6 245.9 L22.6 242.3 M18 249.5 L19.6 251.1 L22.6 247.5 M18 254.6 L19.6 256.2 L22.6 252.6" fill="none" stroke="#333" stroke-width="1.4"/><path d="M303 110.2 Q303 109.1 304.1 109.1 H310 L312.3 111.2 H322.8 Q323.9 111.2 323.9 112.3 V122.8 Q323.9 123.9 322.8 123.9 H312.5 M303 114 V110.2" fill="none" stroke="#b5b5b5" stroke-width="1.4"/><path d="M303 121.5 V123.9 H305" fill="none" stroke="#b5b5b5" stroke-width="1.2" stroke-dasharray="1.2 1"/><path d="M303.4 119 H313.2 M308.3 114 V124" stroke="#8aa8e0" stroke-width="2"/><g fill="none" stroke="#222"><circle cx="351.4" cy="117.5" r="8.6" stroke-width="2.5"/><path d="M347 106.3 H355.6 M351.4 106.3 V109.4" stroke-width="2.3"/><path d="M358.6 108.6 L360.4 110.4" stroke-width="2.2"/><path d="M351.4 117.3 L355.4 120.6" stroke-width="1.8"/></g><path d="M63.9 146.6 H82.3 L75 156.3 V163.6 L71.7 161.6 V156.3 Z" fill="none" stroke="#333" stroke-width="1.6" stroke-linejoin="round"/><path d="M56.2 185 L62.6 191.4 L69 185" fill="none" stroke="#555" stroke-width="2.7"/><path d="M56.2 888.8 L62.6 895.2 L69 888.8" fill="none" stroke="#555" stroke-width="2.7"/><circle cx="90.6" cy="220.7" r="4" fill="#fff" stroke="#444" stroke-width="1.3"/><circle cx="90.6" cy="220.7" r="1.7" fill="#333"/><g transform="translate(0 0)"><path d="M82.3 243.8 L99.4 247 V261.4 L82.3 258.4 Z" fill="#dcdcdc" stroke="#555" stroke-width="1.3" stroke-linejoin="round"/><path d="M90.9 245.5 L99.4 247 V254.8 L90.9 253.2 Z" fill="#ececec" stroke="#555" stroke-width="1.2" stroke-linejoin="round"/></g><g transform="translate(0 32.6)"><path d="M82.3 243.8 L99.4 247 V261.4 L82.3 258.4 Z" fill="#dcdcdc" stroke="#555" stroke-width="1.3" stroke-linejoin="round"/><path d="M90.9 245.5 L99.4 247 V254.8 L90.9 253.2 Z" fill="#ececec" stroke="#555" stroke-width="1.2" stroke-linejoin="round"/></g><g transform="translate(0 65)"><path d="M82.3 243.8 L99.4 247 V261.4 L82.3 258.4 Z" fill="#dcdcdc" stroke="#555" stroke-width="1.3" stroke-linejoin="round"/><path d="M90.9 245.5 L99.4 247 V254.8 L90.9 253.2 Z" fill="#ececec" stroke="#555" stroke-width="1.2" stroke-linejoin="round"/></g><g transform="translate(57 340.2)"><path d="M3.4 15.2 L13.6 2.6 Q14.3 1.8 15.1 2.4 L17 3.9 Q17.8 4.6 17.2 5.4 L7 17.9 L2.6 19.3 Z" fill="#e8f4fc" stroke="#5a7f9e" stroke-width="1.3" stroke-linejoin="round"/><path d="M12.2 4.4 L15.7 7.2 M3.4 15.2 L7 17.9" fill="none" stroke="#5a7f9e" stroke-width="1.1"/><path d="M0 19.8 H19.4" stroke="#5f9bd8" stroke-width="1.3"/></g><g transform="translate(57 405.4)"><path d="M3.4 15.2 L13.6 2.6 Q14.3 1.8 15.1 2.4 L17 3.9 Q17.8 4.6 17.2 5.4 L7 17.9 L2.6 19.3 Z" fill="#fff" stroke="#8c8c8c" stroke-width="1.3" stroke-linejoin="round"/><path d="M12.2 4.4 L15.7 7.2 M3.4 15.2 L7 17.9" fill="none" stroke="#8c8c8c" stroke-width="1.1"/><path d="M0 19.8 H19.4" stroke="#8fb4e4" stroke-width="1.3"/></g><g transform="translate(57 502.9)"><path d="M3.4 15.2 L13.6 2.6 Q14.3 1.8 15.1 2.4 L17 3.9 Q17.8 4.6 17.2 5.4 L7 17.9 L2.6 19.3 Z" fill="#fff" stroke="#8c8c8c" stroke-width="1.3" stroke-linejoin="round"/><path d="M12.2 4.4 L15.7 7.2 M3.4 15.2 L7 17.9" fill="none" stroke="#8c8c8c" stroke-width="1.1"/><path d="M0 19.8 H19.4" stroke="#8fb4e4" stroke-width="1.3"/></g><g transform="translate(57.3 438.3) scale(0.82)" stroke="#8a8a8a" stroke-width="1.3" stroke-linejoin="round" fill="none"><path d="M0.5 0.5 H19 L22.5 4 V22.3 H4 L0.5 19 Z" fill="#fff"/><path d="M0.5 0.5 L4 4 H22.5 M4 4 V22.3"/><path d="M8 8 H18.6 L21.6 10.9 V21.5 H10.9 L8 18.8 Z" fill="#cecece"/><path d="M10.9 10.9 H21.6 V21.5 H10.9 Z" fill="#c2c2c2"/><path d="M8 8 L10.9 10.9"/></g><g transform="translate(57.3 535.8) scale(0.82)" stroke="#8a8a8a" stroke-width="1.3" stroke-linejoin="round" fill="none"><path d="M0.5 0.5 H19 L22.5 4 V22.3 H4 L0.5 19 Z" fill="#fff"/><path d="M0.5 0.5 L4 4 H22.5 M4 4 V22.3"/><path d="M8 8 H18.6 L21.6 10.9 V21.5 H10.9 L8 18.8 Z" fill="#cecece"/><path d="M10.9 10.9 H21.6 V21.5 H10.9 Z" fill="#c2c2c2"/><path d="M8 8 L10.9 10.9"/></g><g transform="translate(56.5 471)" fill="none" stroke="#858585" stroke-width="1.3" stroke-linecap="round"><path d="M11 8 L18.8 10.4 L12.6 19.4 L7.6 17.4 Z" fill="#ebebeb" stroke="none"/><path d="M-0.2 13 L5.1 2.2 Q6.1 0.2 8.5 0.3 C13.5 0.6 20 3.5 20.1 7.9 Q20.1 9 19.5 10 L12.8 19.7"/><ellipse cx="12.6" cy="5" rx="2.7" ry="1.2" transform="rotate(24 12.6 5)" fill="#b5b5b5" stroke="#a0a0a0" stroke-width="0.7"/><path d="M6.4 2.4 C9 5.6 14 8.2 19.4 9.2" stroke-width="0.8" opacity="0.45"/></g><g transform="translate(56.5 568.5)" fill="none" stroke="#858585" stroke-width="1.3" stroke-linecap="round"><path d="M11 8 L18.8 10.4 L12.6 19.4 L7.6 17.4 Z" fill="#ebebeb" stroke="none"/><path d="M-0.2 13 L5.1 2.2 Q6.1 0.2 8.5 0.3 C13.5 0.6 20 3.5 20.1 7.9 Q20.1 9 19.5 10 L12.8 19.7"/><ellipse cx="12.6" cy="5" rx="2.7" ry="1.2" transform="rotate(24 12.6 5)" fill="#b5b5b5" stroke="#a0a0a0" stroke-width="0.7"/><path d="M6.4 2.4 C9 5.6 14 8.2 19.4 9.2" stroke-width="0.8" opacity="0.45"/><path d="M5.6 9.4 L1.6 18 M10 11.4 L6 19.6" stroke-width="0.9" opacity="0.7"/></g><path d="M332.5 468.0 V491.20000000000005" stroke="#222" stroke-width="2" stroke-dasharray="2.2 1.6"/><circle cx="332.5" cy="479.6" r="3.6" fill="#222"/><path d="M332.5 565.5 V588.7" stroke="#222" stroke-width="2" stroke-dasharray="2.2 1.6"/><circle cx="332.5" cy="577.1" r="3.6" fill="#222"/><path d="M407.2 677.1 H419.8" stroke="#6a6a6a" stroke-width="1.5"/><path d="M403.6 683.3 H419.8 M403.6 689.6 H419.8" stroke="#2a2a2a" stroke-width="1.3"/><path d="M403.6 695.7 H419.8" stroke="#5a5a5a" stroke-width="1.7"/><path d="M400.9 681.4 V697.7" stroke="#5a5a5a" stroke-width="1.6"/><path d="M397.1 676 L400.9 679.4 L404.7 676" fill="none" stroke="#222" stroke-width="1.5"/></svg>
<svg class="b" style="left:0px;top:0px;" width="800" height="400" viewBox="0 0 800 400"><path d="M653.4 140.2 L658.8 145.6 L669.4 133.6" fill="none" stroke="#fff" stroke-width="3.3" stroke-linejoin="miter"/><path d="M690.6 134.2 L702.6 146.4 M702.6 134.2 L690.6 146.4" stroke="#c4262e" stroke-width="3.4"/><circle cx="694.6" cy="180.8" r="10.2" fill="#fff" stroke="#222" stroke-width="1.4"/><circle cx="694.6" cy="180.8" r="8.2" fill="none" stroke="#222" stroke-width="1.3"/><path d="M694.6 172.6 A8.2 8.2 0 0 1 702.8 180.8 H694.6 Z" fill="#e4e4e4"/><path d="M694.6 173 V180.8 H702.4" fill="none" stroke="#222" stroke-width="1.6"/><path d="M653 200.2 L662.2 209.4 M662.2 200.2 L653 209.4" stroke="#c4c4c4" stroke-width="1.1"/><circle cx="699.8" cy="378.6" r="7.9" fill="#9a9a9a"/><text x="699.8" y="383.6" font-family="Liberation Sans, sans-serif" font-weight="700" font-size="13.5" text-anchor="middle" fill="#fff">?</text></svg>
<svg class="b" style="left:0px;top:0px;" width="2560" height="320" viewBox="0 0 2560 320"><path d="M2447.6 115.8 L2456.2 126.8 H2439 Z" fill="#e7eaed"/><path d="M2447.6 301.6 L2456.2 290.2 H2439 Z" fill="#e7eaed"/><path d="M2354.2 208.6 L2366 200.2 V217 Z" fill="#e7eaed"/><path d="M2540.8 208.6 L2529.2 200.2 V217 Z" fill="#e7eaed"/><path d="M2388 152 C2396 141 2408 132.5 2421.5 128" fill="none" stroke="#e7eaed" stroke-width="6.4"/><path d="M2380.6 156.4 L2382 143 L2394 154.6 Z" fill="#e7eaed"/><path d="M2507.6 152 C2499.6 141 2487.6 132.5 2474.1 128" fill="none" stroke="#e7eaed" stroke-width="6.4"/><path d="M2515 156.4 L2513.6 143 L2501.6 154.6 Z" fill="#e7eaed"/><path d="M2425.2000000000003 172.6 H2470.7999999999997 A12.4 12.4 0 0 0 2483.2 185.0 V231.0 A12.4 12.4 0 0 0 2470.7999999999997 243.4 H2425.2000000000003 A12.4 12.4 0 0 0 2412.8 231.0 V185.0 A12.4 12.4 0 0 0 2425.2000000000003 172.6 Z" fill="#e7eaed"/><rect x="2419.6" y="180.4" width="56" height="55.6" rx="10" fill="#fff"/><path d="M2409.5 173 V247.2" stroke="#3d3ad6" stroke-width="1.5"/><path d="M2408.8 246.6 H2482.6" stroke="#ea4a50" stroke-width="1.5"/></svg>
<span class="t" style="left:2429.06px;top:201px;font-size:16.8px;line-height:16.8px;color:#555;transform:scaleX(0.9227);">Front</span>
<span class="t" style="left:2405.92px;top:153px;font-size:17px;line-height:17px;color:#4338c8;font-weight:700;transform:scaleX(0.7419);">Z</span>
<span class="t" style="left:2491.97px;top:239px;font-size:17px;line-height:17px;color:#e0475a;font-weight:700;transform:scaleX(0.7661);">X</span>
<svg class="b" style="left:0px;top:0px;" width="2560" height="320" viewBox="0 0 2560 320"><g stroke="#333" stroke-width="1.3" stroke-linejoin="round"><path d="M2503.6 280.6 L2514.6 284.6 L2503.6 289.4 L2492.8 284.6 Z" fill="#fff"/><path d="M2492.8 284.6 L2503.6 289.4 V302.6 L2492.8 296.6 Z" fill="#a8a8a8"/><path d="M2514.6 284.6 L2503.6 289.4 V302.6 L2514.6 296.6 Z" fill="#d9d9d9"/></g><path d="M2525.4 289 H2535.2 L2530.3 294.2 Z" fill="#222"/></svg>
<div class="b" style="left:2520px;top:554px;width:41px;height:166px;background:#fff;border:1px solid #9a9a9a;"></div>
<div class="b" style="left:2520px;top:595px;width:40px;height:1px;background:#9a9a9a;"></div>
<div class="b" style="left:2520px;top:636px;width:40px;height:1px;background:#9a9a9a;"></div>
<div class="b" style="left:2520px;top:677px;width:40px;height:1px;background:#9a9a9a;"></div>
<div class="b" style="left:2520px;top:732px;width:41px;height:84px;background:#fff;border:1px solid #9a9a9a;"></div>
<div class="b" style="left:2520px;top:774px;width:40px;height:1px;background:#9a9a9a;"></div>
<svg class="b" style="left:0px;top:0px;" width="2560" height="720" viewBox="0 0 2560 720"><path d="M2531.5 579.5 L2540.2 564 L2545.6 566.6 L2540 580 Z" fill="#666"/><path d="M2538 580 L2547.2 569.6 Q2549.6 568.2 2551.2 570.6 L2552.2 575 L2547 580 Z" fill="#999"/><path d="M2536 580 L2543 571 L2547.4 575 L2544 580 Z" fill="#d4d4d4"/><rect x="2528.6" y="580.4" width="23.4" height="7.4" rx="1.6" fill="#fff" stroke="#666" stroke-width="1.2"/><rect x="2545" y="581" width="6.4" height="6.2" fill="#d8d8d8"/><path d="M2537 580.6 V587.6 M2545 580.6 V587.6" stroke="#666" stroke-width="1"/><circle cx="2532.4" cy="584.2" r="1.2" fill="#777"/><g fill="#fff" stroke="#333" stroke-width="1.4" stroke-linejoin="round"><path d="M2542.8 606.6 L2551.6000000000004 612.1 V623.1 L2542.8 628.6 L2534.0 623.1 V612.1 Z"/><path d="M2534.0 612.1 L2542.8 617.6 L2551.6000000000004 612.1 M2542.8 617.6 V628.6" fill="none"/></g><rect x="2528.2" y="605.2" width="11.6" height="9.2" fill="#2b62c4"/><path d="M2532.0666666666666 605.2 V614.4000000000001 M2535.933333333333 605.2 V614.4000000000001 M2528.2 609.8000000000001 H2539.7999999999997" stroke="#9cc0f0" stroke-width="0.9"/><g fill="#fff" stroke="#333" stroke-width="1.3" stroke-linejoin="round"><path d="M2541.6 649.1 L2548.4 653.35 V661.85 L2541.6 666.1 L2534.7999999999997 661.85 V653.35 Z"/><path d="M2534.7999999999997 653.35 L2541.6 657.6 L2548.4 653.35 M2541.6 657.6 V666.1" fill="none"/></g><rect x="2528.2" y="646.2" width="11.6" height="9.2" fill="#555"/><path d="M2532.0666666666666 646.2 V655.4000000000001 M2535.933333333333 646.2 V655.4000000000001 M2528.2 650.8000000000001 H2539.7999999999997" stroke="#bbb" stroke-width="0.9"/><path d="M2532 657 Q2530.2 657 2530.2 659 V661.6 Q2530.2 663 2528.6 663 Q2530.2 663 2530.2 664.6 V667 Q2530.2 669 2532 669" fill="none" stroke="#555" stroke-width="1.1"/><path d="M2549.4 648.6 Q2551.2 648.6 2551.2 650.6 V656.6 Q2551.2 658.6 2552.8 658.6 Q2551.2 658.6 2551.2 660.6 V666.6 Q2551.2 668.6 2549.4 668.6" fill="none" stroke="#555" stroke-width="1.1"/><rect x="2528.2" y="687.2" width="11.6" height="9.2" fill="#444"/><path d="M2532.0666666666666 687.2 V696.4000000000001 M2535.933333333333 687.2 V696.4000000000001 M2528.2 691.8000000000001 H2539.7999999999997" stroke="#bbb" stroke-width="0.9"/><path d="M2531.4 695 Q2527.6 702 2531.4 709.4" fill="none" stroke="#222" stroke-width="1.8"/><path d="M2549.6 693 Q2553.6 701 2549.6 709.4" fill="none" stroke="#222" stroke-width="1.8"/></svg>
<span class="t" style="left:2533.56px;top:690px;font-size:22px;line-height:22px;color:#222;font-weight:700;font-style:italic;transform:scaleX(1.3915);font-family:'Liberation Serif',serif;">x</span>
<svg class="b" style="left:0px;top:0px;" width="2560" height="820" viewBox="0 0 2560 820"><rect x="2526.2" y="738" width="30" height="30" rx="4" fill="#d6d6d6"/><path d="M2541.2 753 L2549.11 744.52 A11.6 11.6 0 0 0 2533.29 744.52 Z" fill="#6cc04a"/><path d="M2541.2 753 L2532.72 745.09 A11.6 11.6 0 0 0 2532.72 760.91 Z" fill="#dc3a3a"/><path d="M2541.2 753 L2533.29 761.48 A11.6 11.6 0 0 0 2549.11 761.48 Z" fill="#f2a93b"/><path d="M2541.2 753 L2549.68 760.91 A11.6 11.6 0 0 0 2549.68 745.09 Z" fill="#45b4ec"/><rect x="2526.2" y="779.4" width="30" height="30" rx="3" fill="#cfcfcf"/><rect x="2528.8" y="782.4" width="24.6" height="24.4" fill="#1a58c8" stroke="#111" stroke-width="1"/></svg>
<span class="t" style="left:2530.91px;top:787px;font-size:19px;line-height:19px;color:#fff;font-weight:700;transform:scaleX(0.6563);font-family:'Liberation Serif',serif;">MK</span>
<svg class="b" style="left:0px;top:0px;" width="2560" height="1295" viewBox="0 0 2560 1295"><g fill="none" stroke="#222" stroke-width="1.5"><ellipse cx="2450.2" cy="1273.6" rx="6.4" ry="3.6" /><ellipse cx="2450.2" cy="1273.4" rx="2.8" ry="1.3" stroke-width="1.2"/><path d="M2443.8 1273.6 V1278 M2456.6 1273.6 V1279.8 Q2456.6 1282.8 2452.6 1282.8 H2437.8 V1277.6 H2448"/><path d="M2440.4 1280 V1282.6 M2443 1280 V1282.6 M2445.6 1280 V1282.6 M2448.2 1280 V1282.6 M2450.8 1280 V1282.6 M2453.4 1280 V1282.6" stroke-width="0.8"/></g><g fill="none" stroke="#222" stroke-width="1.6" stroke-linejoin="round"><path d="M2479.8 1284.2 Q2479 1283.6 2479.4 1282.2 A12 14 0 0 1 2503 1282.2 Q2503.4 1283.6 2502.6 1284.2 Z"/><path d="M2484.6 1280.6 A6.8 8 0 0 1 2497.8 1280.6 H2493.4 Q2491.2 1278.4 2489 1280.6 Z" stroke-width="1.4"/><path d="M2482 1279 A9.6 11.2 0 0 1 2500.4 1279" stroke-width="0.9" stroke-dasharray="0.9 1.5"/></g><g fill="none" stroke="#222"><path d="M2527.4 1269.6 H2543.4 M2535.4 1269.6 V1282" stroke-width="1.8"/><path d="M2527 1283.4 H2543.8" stroke-width="2.2"/><path d="M2529.6 1270 L2527.2 1278.6 H2532 Z M2541.2 1270 L2538.8 1278.6 H2543.6 Z" stroke-width="1.1" fill="#888"/><path d="M2526.8 1279 H2532.4 M2538.4 1279 H2544" stroke-width="1.6"/></g></svg>
<svg class="b" style="left:0px;top:0px;" width="800" height="1332" viewBox="0 0 800 1332"><path d="M15 1308 Q13.4 1308 13.4 1309.6 V1316.6 Q13.4 1318.2 15 1318.2 H20.6 A8.3 8.3 0 0 1 34.8 1313.6 L36.2 1314.8 V1309.6 Q36.2 1308 34.6 1308 Z" fill="#333"/><circle cx="28.4" cy="1317.4" r="5.2" fill="none" stroke="#333" stroke-width="2.2"/><path d="M32.2 1321.4 L36.2 1325.6" stroke="#333" stroke-width="2.8"/><path d="M61 1313 H80 M70.5 1303.6 V1322.4" stroke="#666" stroke-width="3.2"/><path d="M103.6 1311.2 L115.4 1298.8 L120 1303.6 V1300.2 H123.8 V1307.6 L127.2 1311.2 H124.6 V1320.8 H118.2 V1313.6 H112.6 V1320.8 H106.2 V1311.2 Z" fill="#666"/><path d="M158.6 1302.2 Q158.6 1301.2 159.6 1301.2 H166 L168 1303.2 H178 Q179 1303.2 179 1304.2 V1316.8 Q179 1317.8 178 1317.8 H159.6 Q158.6 1317.8 158.6 1316.8 Z" fill="#fff" stroke="#444" stroke-width="1.4"/><g stroke="#444" stroke-width="1.3" stroke-linejoin="round"><path d="M307.6 1300.4 H325.6 L329.4 1304.2 V1322.4 H311.4 L307.6 1318.6 Z" fill="#fff"/><path d="M307.6 1300.4 L311.4 1304.2 H329.4 M311.4 1304.2 V1322.4" fill="none"/><path d="M307.6 1300.4 H318.6 L321.4 1303.2 V1314 H310.4 L307.6 1311.2 Z" fill="#8c8c8c"/><path d="M310.4 1303.2 H321.4 V1314 H310.4 Z" fill="#999"/><path d="M307.6 1300.4 L310.4 1303.2" fill="none"/></g><g stroke="#444" stroke-width="1.3" stroke-linejoin="round" fill="#fff"><path d="M572.6 1302 L575 1300.4 H580.4 L582.6 1302.4 V1320.6 L580.4 1322.6 H574.6 L572.6 1320.6 Z"/><path d="M572.6 1302 H580.2 L582.6 1302.4 M580.2 1302 V1322.4" fill="none"/><path d="M561.8 1307.4 L564 1305.8 H569.6 L571.8 1307.8 V1320.6 L569.6 1322.6 H563.8 L561.8 1320.6 Z"/><path d="M561.8 1307.4 H567.2 L569.2 1309.2 V1322.4 M569.2 1309.2 L571.8 1307.8" fill="none"/></g></svg>
</div></body></html>
